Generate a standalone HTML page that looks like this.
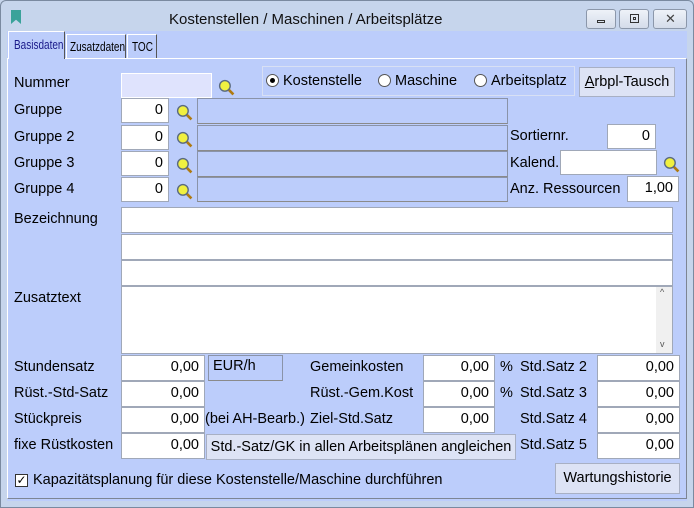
<!DOCTYPE html>
<html><head><meta charset="utf-8"><style>
*{box-sizing:border-box;margin:0;padding:0}
body{width:694px;height:508px;overflow:hidden;background:#c6d5ec;font-family:"Liberation Sans",sans-serif;font-size:14.5px;color:#000;position:relative}
.a{position:absolute}
.in{position:absolute;background:#fff;border:1px solid #a0a8b8;text-align:right;padding-right:5px;line-height:23px}
.bx{position:absolute;border:1px solid #8a93a8;border-bottom-color:#8a8a8a}
.lb{position:absolute;white-space:nowrap}
.btn{position:absolute;background:#dde3f5;border:1px solid #a8b0c4;text-align:center;white-space:nowrap}
.mag{position:absolute;width:17px;height:17px}
.rad{display:inline-block;width:13px;height:13px;border:1px solid #555;border-radius:50%;background:#fff;vertical-align:-2px;margin-right:4px;position:relative}
.wb{position:absolute;top:9px;width:30px;height:20px;border:1px solid #8b97aa;border-radius:3px;background:linear-gradient(#eef2f8,#d4dcea)}
.tab{position:absolute;font-size:12.5px;transform:scaleX(0.8);transform-origin:0 0}
</style></head><body>
<div class="a" style="left:0;top:0;width:694px;height:508px;border:1px solid #7a8aa0;border-radius:6px 6px 0 0"></div>
<div class="a" style="left:11px;top:10px;width:10px;height:14px;background:#3aa29a;clip-path:polygon(0 0,100% 0,100% 100%,50% 70%,0 100%)"></div>
<div class="lb" style="left:169px;top:11px;font-size:15px;color:#111">Kostenstellen / Maschinen / Arbeitsplätze</div>
<div class="wb" style="left:586px"><div class="a" style="left:10px;top:10px;width:8px;height:3px;border:1px solid #333"></div></div>
<div class="wb" style="left:619px"><div class="a" style="left:10px;top:4px;width:9px;height:9px;border:1px solid #333"></div><div class="a" style="left:13px;top:7px;width:3px;height:3px;border:1px solid #333"></div></div>
<div class="wb" style="left:653px;width:34px"><div class="a" style="left:11px;top:0px;font-size:13px;color:#444;line-height:18px">✕</div></div>
<div class="a" style="left:7px;top:31px;width:680px;height:470px;background:#bccdfb"></div>
<div class="a" style="left:7px;top:58px;width:680px;height:441px;border:1px solid #fff;border-right-color:#7d8594;border-bottom-color:#7d8594"></div>
<div class="a" style="left:8px;top:31px;width:57px;height:28px;background:#bccdfb;border:1px solid #fff;border-bottom:none;border-right-color:#555"></div>
<div class="lb tab" style="left:14px;top:38px;color:#1a1a8a">Basisdaten</div>
<div class="a" style="left:66px;top:34px;width:60px;height:24px;border:1px solid #fff;border-bottom:none;border-right-color:#555"></div>
<div class="lb tab" style="left:70px;top:40px">Zusatzdaten</div>
<div class="a" style="left:127px;top:34px;width:30px;height:24px;border:1px solid #fff;border-bottom:none;border-right-color:#555"></div>
<div class="lb tab" style="left:132px;top:40px">TOC</div>

<svg width="0" height="0" style="position:absolute"><defs><g id="m"><line x1="9" y1="9" x2="14.5" y2="14.5" stroke="#b07a10" stroke-width="2.5"/><circle cx="6.5" cy="6.5" r="5" fill="#f0f040" stroke="#5a6a80" stroke-width="1.3"/></g></defs></svg>

<div class="lb" style="left:14px;top:75px">Nummer</div>
<div class="in" style="left:121px;top:73px;width:91px;height:25px;background:#dfe3fd;border-color:#fff"></div>
<svg class="mag" style="left:218px;top:79px" viewBox="0 0 16 16"><use href="#m"/></svg>
<div class="a" style="left:262px;top:66px;width:313px;height:30px;border:1px solid #d8e0f4"></div>
<div class="lb" style="left:266px;top:73px"><span class="rad"><span class="a" style="left:3px;top:3px;width:5px;height:5px;border-radius:50%;background:#000"></span></span>Kostenstelle</div>
<div class="lb" style="left:378px;top:73px"><span class="rad"></span>Maschine</div>
<div class="lb" style="left:474px;top:73px"><span class="rad"></span>Arbeitsplatz</div>
<div class="btn" style="left:579px;top:67px;width:96px;height:30px;line-height:28px"><u>A</u>rbpl-Tausch</div>

<div class="lb" style="left:14px;top:102px">Gruppe</div>
<div class="lb" style="left:14px;top:129px">Gruppe 2</div>
<div class="lb" style="left:14px;top:155px">Gruppe 3</div>
<div class="lb" style="left:14px;top:181px">Gruppe 4</div>
<div class="in" style="left:121px;top:98px;width:48px;height:25px">0</div>
<div class="in" style="left:121px;top:125px;width:48px;height:25px">0</div>
<div class="in" style="left:121px;top:151px;width:48px;height:25px">0</div>
<div class="in" style="left:121px;top:177px;width:48px;height:25px">0</div>
<svg class="mag" style="left:176px;top:104px" viewBox="0 0 16 16"><use href="#m"/></svg>
<svg class="mag" style="left:176px;top:131px" viewBox="0 0 16 16"><use href="#m"/></svg>
<svg class="mag" style="left:176px;top:157px" viewBox="0 0 16 16"><use href="#m"/></svg>
<svg class="mag" style="left:176px;top:183px" viewBox="0 0 16 16"><use href="#m"/></svg>
<div class="bx" style="left:197px;top:98px;width:311px;height:26px"></div>
<div class="bx" style="left:197px;top:125px;width:311px;height:26px"></div>
<div class="bx" style="left:197px;top:151px;width:311px;height:26px"></div>
<div class="bx" style="left:197px;top:177px;width:311px;height:25px"></div>
<div class="lb" style="left:510px;top:128px">Sortiernr.</div>
<div class="in" style="left:607px;top:124px;width:49px;height:25px">0</div>
<div class="lb" style="left:510px;top:155px">Kalend.</div>
<div class="in" style="left:560px;top:150px;width:97px;height:25px"></div>
<svg class="mag" style="left:663px;top:156px" viewBox="0 0 16 16"><use href="#m"/></svg>
<div class="lb" style="left:510px;top:181px">Anz. Ressourcen</div>
<div class="in" style="left:627px;top:176px;width:52px;height:26px">1,00</div>

<div class="lb" style="left:14px;top:211px">Bezeichnung</div>
<div class="in" style="left:121px;top:207px;width:552px;height:26px"></div>
<div class="in" style="left:121px;top:234px;width:552px;height:26px"></div>
<div class="in" style="left:121px;top:260px;width:552px;height:26px"></div>
<div class="lb" style="left:14px;top:290px">Zusatztext</div>
<div class="in" style="left:121px;top:286px;width:552px;height:68px"></div>
<div class="a" style="left:656px;top:287px;width:16px;height:66px;background:#f0f0f0"></div>
<div class="lb" style="left:660px;top:287px;font-size:9px;color:#555">^</div>
<div class="lb" style="left:660px;top:339px;font-size:9px;color:#555">v</div>

<div class="lb" style="left:14px;top:359px">Stundensatz</div>
<div class="lb" style="left:14px;top:385px">Rüst.-Std-Satz</div>
<div class="lb" style="left:14px;top:411px">Stückpreis</div>
<div class="lb" style="left:14px;top:437px">fixe Rüstkosten</div>
<div class="in" style="left:121px;top:355px;width:84px;height:26px">0,00</div>
<div class="in" style="left:121px;top:381px;width:84px;height:26px">0,00</div>
<div class="in" style="left:121px;top:407px;width:84px;height:26px">0,00</div>
<div class="in" style="left:121px;top:433px;width:84px;height:26px">0,00</div>
<div class="bx" style="left:208px;top:355px;width:75px;height:26px;padding:2px 4px">EUR/h</div>
<div class="lb" style="left:205px;top:411px">(bei AH-Bearb.)</div>
<div class="btn" style="left:206px;top:434px;width:310px;height:26px;line-height:24px">Std.-Satz/GK in allen Arbeitsplänen angleichen</div>
<div class="lb" style="left:310px;top:359px">Gemeinkosten</div>
<div class="lb" style="left:310px;top:385px">Rüst.-Gem.Kost</div>
<div class="lb" style="left:310px;top:411px">Ziel-Std.Satz</div>
<div class="in" style="left:423px;top:355px;width:72px;height:26px">0,00</div>
<div class="in" style="left:423px;top:381px;width:72px;height:26px">0,00</div>
<div class="in" style="left:423px;top:407px;width:72px;height:26px">0,00</div>
<div class="lb" style="left:500px;top:359px">%</div>
<div class="lb" style="left:500px;top:385px">%</div>
<div class="lb" style="left:520px;top:359px">Std.Satz 2</div>
<div class="lb" style="left:520px;top:385px">Std.Satz 3</div>
<div class="lb" style="left:520px;top:411px">Std.Satz 4</div>
<div class="lb" style="left:520px;top:437px">Std.Satz 5</div>
<div class="in" style="left:597px;top:355px;width:83px;height:26px">0,00</div>
<div class="in" style="left:597px;top:381px;width:83px;height:26px">0,00</div>
<div class="in" style="left:597px;top:407px;width:83px;height:26px">0,00</div>
<div class="in" style="left:597px;top:433px;width:83px;height:26px">0,00</div>

<div class="a" style="left:15px;top:474px;width:13px;height:13px;border:1px solid #333;background:#fff;font-size:12px;line-height:11px;text-align:center">✓</div>
<div class="lb" style="left:33px;top:472px">Kapazitätsplanung für diese Kostenstelle/Maschine durchführen</div>
<div class="btn" style="left:555px;top:463px;width:125px;height:31px;line-height:29px">Wartungshistorie</div>
</body></html>
